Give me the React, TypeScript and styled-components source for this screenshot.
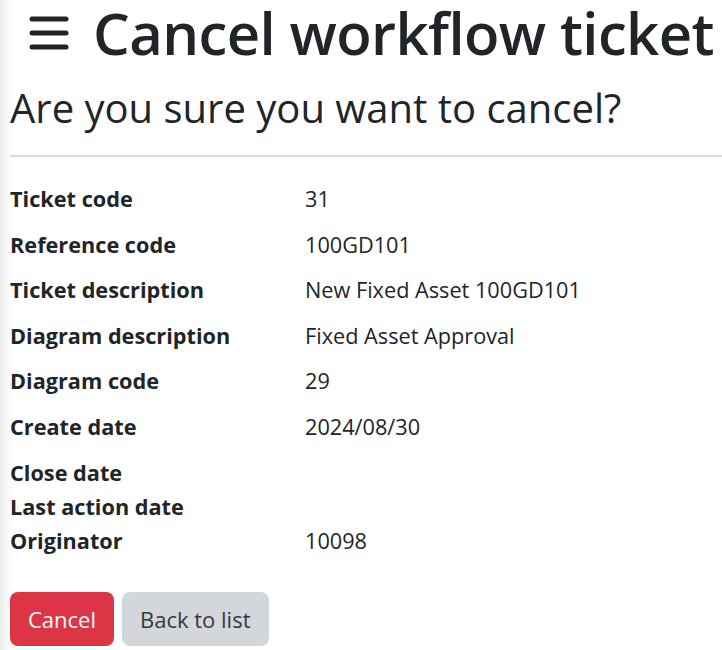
import React from 'react';
import styled, { createGlobalStyle } from 'styled-components';

const GlobalStyle = createGlobalStyle`
  html, body {
    margin: 0;
    padding: 0;
    background: linear-gradient(to right, #ececec 0, #f8f8f8 6px, #ffffff 14px);
    color: #212529;
    font-family: "Open Sans", "Noto Sans", sans-serif;
  }
`;

const Page = styled.main`
  padding: 0 0 0 10px;
  min-height: 650px;
  box-sizing: border-box;
`;

const TitleBar = styled.header`
  display: flex;
  align-items: center;
  gap: 24px;
  padding-left: 19px;
  height: 66px;
`;

const Title = styled.h1`
  margin: 0;
  font-size: 58px;
  font-weight: 600;
  letter-spacing: -0.6px;
  line-height: 66px;
  white-space: nowrap;
`;

const Subtitle = styled.h2`
  margin: 18px 0 0;
  font-size: 40px;
  font-weight: 500;
  line-height: 1.2;
`;

const Rule = styled.hr`
  margin: 23px 0 25px;
  border: 0;
  border-top: 2px solid #dcdcdc;
`;

const Details = styled.dl`
  display: grid;
  grid-template-columns: 295px 1fr;
  margin: 0;
  font-size: 21.7px;
  line-height: 34px;
`;

const Label = styled.dt`
  font-weight: 700;
`;

const Value = styled.dd<{ $empty?: boolean }>`
  margin: 0 0 ${(p) => (p.$empty ? '0' : '11.6px')};
`;

const Actions = styled.div`
  display: flex;
  gap: 8px;
  margin-top: 23px;
`;

const Button = styled.button<{ $variant: 'danger' | 'light' }>`
  font-family: inherit;
  font-size: 22px;
  line-height: 34px;
  padding: 10px 18px;
  border: 0;
  border-radius: 8px;
  background: ${(p) => (p.$variant === 'danger' ? '#dc3545' : '#d3d6da')};
  color: ${(p) => (p.$variant === 'danger' ? '#ffffff' : '#343a40')};
  cursor: pointer;
`;

const MenuIcon = () => (
  <svg width="40" height="36" viewBox="0 0 40 36">
    <g stroke="#212529" strokeWidth="5" strokeLinecap="round">
      <line x1="3" y1="4" x2="37" y2="4" />
      <line x1="3" y1="18" x2="37" y2="18" />
      <line x1="3" y1="32" x2="37" y2="32" />
    </g>
  </svg>
);

const rows: { label: string; value: string }[] = [
  { label: 'Ticket code', value: '31' },
  { label: 'Reference code', value: '100GD101' },
  { label: 'Ticket description', value: 'New Fixed Asset 100GD101' },
  { label: 'Diagram description', value: 'Fixed Asset Approval' },
  { label: 'Diagram code', value: '29' },
  { label: 'Create date', value: '2024/08/30' },
  { label: 'Close date', value: '' },
  { label: 'Last action date', value: '' },
  { label: 'Originator', value: '10098' },
];

export default function App() {
  return (
    <>
      <GlobalStyle />
      <Page>
        <TitleBar>
          <MenuIcon />
          <Title>Cancel workflow ticket</Title>
        </TitleBar>
        <Subtitle>Are you sure you want to cancel?</Subtitle>
        <Rule />
        <Details>
          {rows.map((r) => (
            <React.Fragment key={r.label}>
              <Label>{r.label}</Label>
              <Value $empty={!r.value}>{r.value}</Value>
            </React.Fragment>
          ))}
        </Details>
        <Actions>
          <Button $variant="danger">Cancel</Button>
          <Button $variant="light">Back to list</Button>
        </Actions>
      </Page>
    </>
  );
}
